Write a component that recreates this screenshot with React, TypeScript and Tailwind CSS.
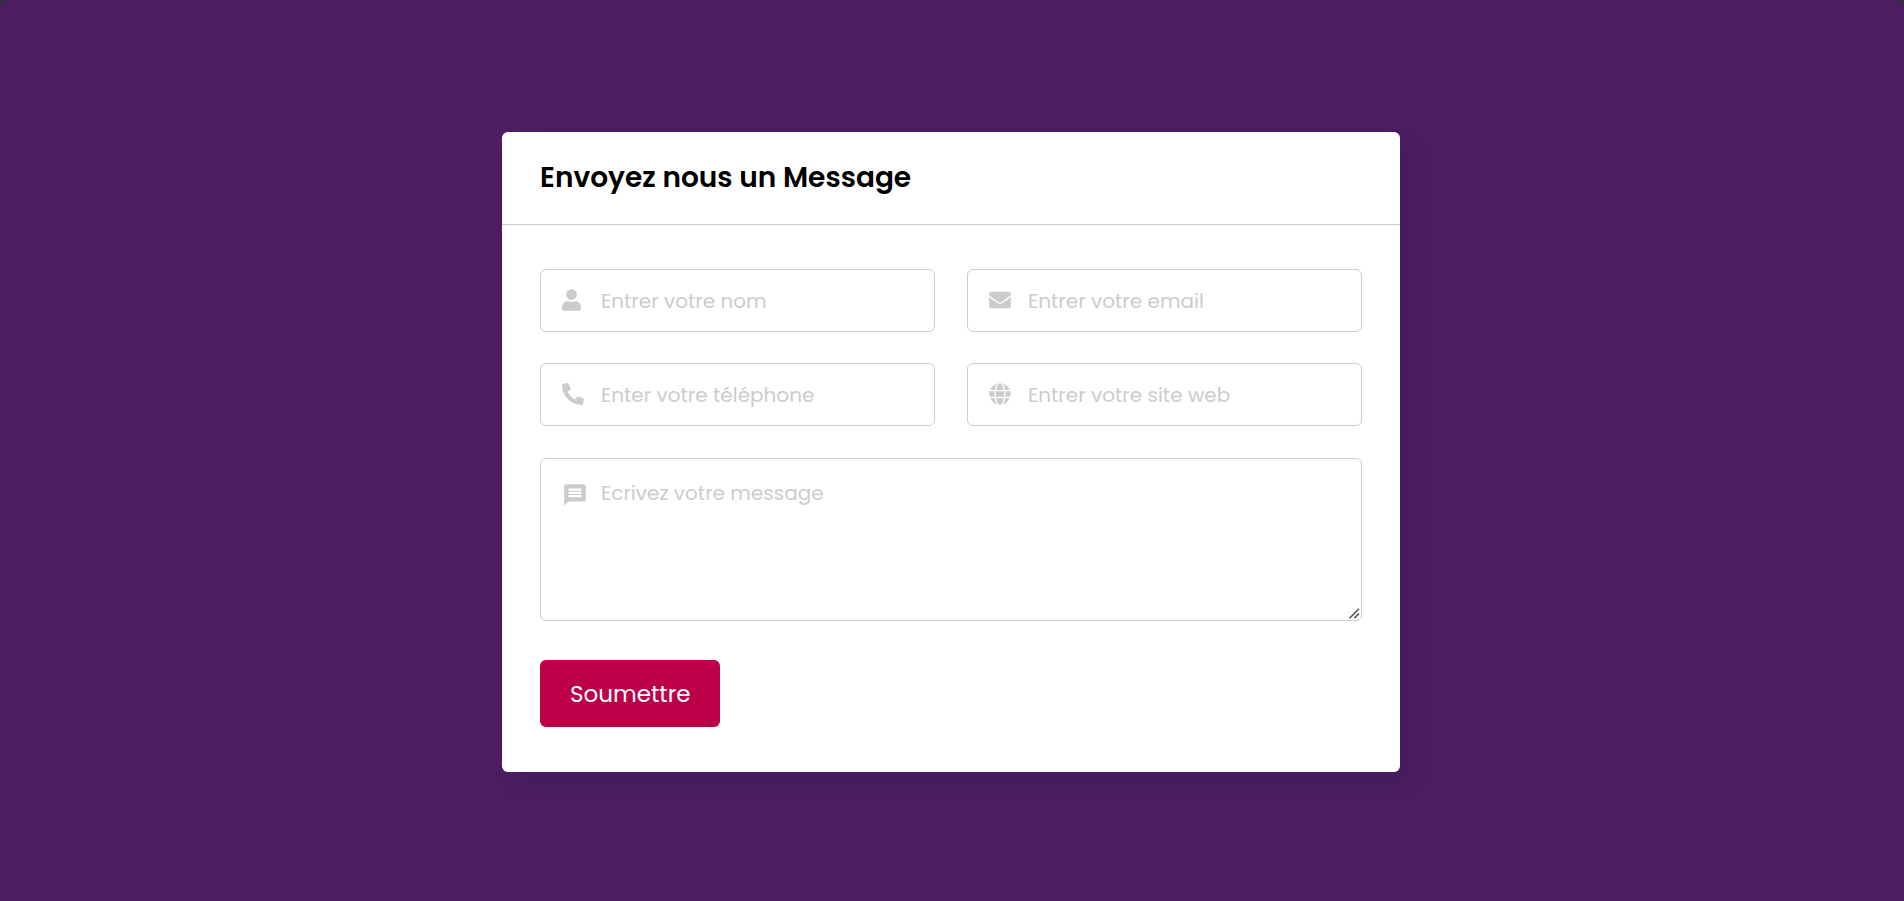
import type { ComponentType } from "react";
import { FaEnvelope, FaGlobe, FaPhoneAlt, FaUser } from "react-icons/fa";
import { MdMessage } from "react-icons/md";

type FieldProps = {
  id: string;
  type: string;
  placeholder: string;
  icon: ComponentType<{ className?: string }>;
  iconSize: string;
};

const fields: FieldProps[] = [
  { id: "nom", type: "text", placeholder: "Entrer votre nom", icon: FaUser, iconSize: "h-[22px] w-[19px]" },
  { id: "email", type: "email", placeholder: "Entrer votre email", icon: FaEnvelope, iconSize: "size-[22px]" },
  { id: "telephone", type: "tel", placeholder: "Enter votre téléphone", icon: FaPhoneAlt, iconSize: "size-[22px]" },
  { id: "site", type: "url", placeholder: "Entrer votre site web", icon: FaGlobe, iconSize: "size-[22px]" },
];

function Field({ id, type, placeholder, icon: Icon, iconSize }: FieldProps) {
  return (
    <div className="relative">
      <label htmlFor={id} aria-label={placeholder} className="absolute top-0 bottom-0.5 left-[22px] flex items-center text-[#ccc]">
        <Icon className={iconSize} />
      </label>
      <input
        id={id}
        name={id}
        type={type}
        placeholder={placeholder}
        className="h-[63px] w-full rounded-md border border-[#ccc] bg-white pr-5 pl-[60px] text-xl text-black outline-none placeholder:text-[#ccc] focus:border-[#be0049]"
      />
    </div>
  );
}

export default function App() {
  return (
    <div className="bg-[#333]">
      <main className="flex min-h-screen items-center justify-center rounded-t-lg bg-[#4c1d63] pt-[3px] pr-[2px] font-['Poppins','Inter',sans-serif]">
        <section className="w-full max-w-[898px] rounded-md bg-white shadow-[12px_12px_20px_rgba(0,0,0,0.07)]">
          <header className="border-b border-[#ccc] px-[38px] py-6">
            <h1 className="text-[28px] leading-[44px] font-semibold text-black">Envoyez nous un Message</h1>
          </header>
          <form className="px-[38px] pt-11 pb-[45px]" onSubmit={(e) => e.preventDefault()}>
            <div className="grid grid-cols-1 gap-x-8 gap-y-[31px] sm:grid-cols-2">
              {fields.map((field) => (
                <Field key={field.id} {...field} />
              ))}
            </div>
            <div className="relative mt-8">
              <label htmlFor="message" aria-label="Ecrivez votre message" className="absolute top-[24px] left-[22px] text-[#ccc]">
                <MdMessage className="size-[26px]" />
              </label>
              <textarea
                id="message"
                name="message"
                placeholder="Ecrivez votre message"
                className="block h-[163px] w-full resize-y rounded-md border border-[#ccc] bg-white pt-[18px] pr-5 pl-[60px] text-xl leading-8 text-black outline-none placeholder:text-[#ccc] focus:border-[#be0049]"
              />
              <svg
                viewBox="0 0 13 13"
                aria-hidden="true"
                className="pointer-events-none absolute right-[2px] bottom-[2px] size-[13px] bg-white"
              >
                <path d="M2.5 12.3L12 2.8M7.3 12.3L12 7.6" stroke="#555" strokeWidth="1.6" fill="none" />
              </svg>
            </div>
            <button type="submit" className="mt-[39px] h-[67px] rounded-md bg-[#be0049] px-[30px] pt-0.5 text-[23px] text-white">
              Soumettre
            </button>
          </form>
        </section>
      </main>
    </div>
  );
}
